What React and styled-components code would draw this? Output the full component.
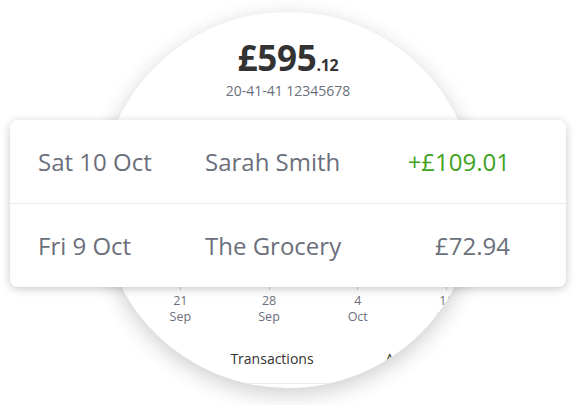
import React from "react";
import styled, { createGlobalStyle } from "styled-components";

const GlobalStyle = createGlobalStyle`
  body {
    margin: 0;
    background: #fff;
    font-family: 'Open Sans', 'Liberation Sans', sans-serif;
  }
`

const Stage = styled.div`
  width: 577px;
  height: 405px;
  display: grid;
  overflow: hidden;

  & > * {
    grid-area: 1 / 1;
  }
`

const Circle = styled.div`
  justify-self: center;
  align-self: start;
  margin-top: 12px;
  margin-left: -1px;
  width: 376px;
  height: 376px;
  border-radius: 50%;
  background: #fff;
  overflow: hidden;
  box-shadow: 0 6px 22px rgba(0, 0, 0, 0.2);
  display: flex;
  flex-direction: column;
  align-items: center;
`

const Balance = styled.div`
  margin-top: 28px;
  font-size: 35px;
  font-weight: 700;
  color: #333;
  line-height: 36px;
  letter-spacing: -0.3px;

  & small {
    font-size: 16px;
  }
`

const SortCode = styled.div`
  margin-top: -1px;
  font-size: 14px;
  color: #6b6f7b;
  line-height: 18px;
`

const Ticks = styled.div`
  margin-top: 184px;
  align-self: stretch;
  padding-left: 36px;
  display: flex;
`

const Tick = styled.div`
  flex: 0 0 88.7px;
  display: flex;
  flex-direction: column;
  align-items: center;
  font-size: 12.5px;
  line-height: 16px;
  color: #6b6f7b;

  &::before {
    content: '';
    width: 1px;
    height: 6px;
    background: #c9ccd3;
    margin-bottom: 3px;
  }
`

const Tabs = styled.div`
  margin-top: 24px;
  align-self: stretch;
  padding-left: 102px;
  display: flex;
  border-bottom: 1px solid #e6e9f0;
  padding-bottom: 15px;
`

const Tab = styled.div`
  flex: 0 0 ${props => props.w}px;
  text-align: center;
  font-size: 14px;
  color: #333;
`

const Card = styled.div`
  align-self: start;
  margin: 120px 0 0 10px;
  width: 556px;
  background: #fff;
  border-radius: 8px;
  box-shadow: 0 2px 10px rgba(0, 0, 0, 0.22);
`

const Row = styled.div`
  height: 83px;
  display: flex;
  align-items: center;
  padding: 0 56px 0 28px;
  font-size: 24px;
  color: #6b6f7b;

  & + & {
    border-top: 1px solid #e6eaf0;
  }
`

const DateCell = styled.div`
  width: 167px;
`

const Name = styled.div`
  flex: 1;
`

const Amount = styled.div`
  color: ${props => props.credit ? '#3fa21e' : '#6b6f7b'};
`

const ticks = [
  ["21", "Sep"],
  ["28", "Sep"],
  ["4", "Oct"],
  ["11", "Oct"],
]

const rows = [
  { date: "Sat 10 Oct", name: "Sarah Smith", amount: "+£109.01", credit: true },
  { date: "Fri 9 Oct", name: "The Grocery", amount: "£72.94" },
]

const App = () => {
  return (
    <Stage>
      <GlobalStyle />
      <Circle>
        <Balance>£595<small>.12</small></Balance>
        <SortCode>20-41-41 12345678</SortCode>
        <Ticks>
          {ticks.map(([d, m]) => (
            <Tick key={d + m}>
              <span>{d}</span>
              <span>{m}</span>
            </Tick>
          ))}
        </Ticks>
        <Tabs>
          <Tab w={140}>Transactions</Tab>
          <Tab w={146}>Accounts</Tab>
        </Tabs>
      </Circle>
      <Card>
        {rows.map(r => (
          <Row key={r.date}>
            <DateCell>{r.date}</DateCell>
            <Name>{r.name}</Name>
            <Amount credit={r.credit}>{r.amount}</Amount>
          </Row>
        ))}
      </Card>
    </Stage>
  )
}

export default App;
